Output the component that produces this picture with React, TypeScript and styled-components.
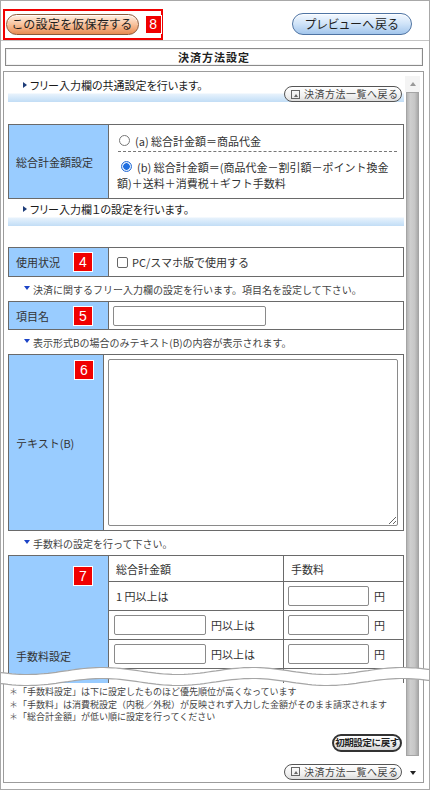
import React from "react";
import styled, { createGlobalStyle } from "styled-components";

const GlobalStyle = createGlobalStyle`
  html, body {
    margin: 0;
    padding: 0;
    background: #fff;
  }
  body {
    font-family: "Noto Sans CJK JP", "Noto Sans", sans-serif;
    color: #333;
  }
  * {
    box-sizing: border-box;
  }
`;

const Page = styled.div`
  position: relative;
  width: 430px;
  height: 790px;
  overflow: hidden;
  border: 1px solid #a8a8a8;
  background: #fff;
`;

const Toolbar = styled.div`
  height: 40px;
  padding: 7px 17px 0 2px;
  display: flex;
  align-items: center;
  justify-content: space-between;
  border-bottom: 1px solid #c4c4c4;
`;

const RedFrame = styled.div`
  width: 160px;
  height: 31px;
  border: 2px solid #f00000;
  display: flex;
  align-items: center;
  padding-left: 1px;
  gap: 7px;
`;

const PillButton = styled.button<{ $tone: "orange" | "blue" }>`
  height: ${(p) => (p.$tone === "orange" ? 21 : 22)}px;
  width: ${(p) => (p.$tone === "orange" ? 137 : 120)}px;
  border-radius: 11px;
  border: 1px solid ${(p) => (p.$tone === "orange" ? "#8c5a3a" : "#4f74a3")};
  background: ${(p) =>
    p.$tone === "orange"
      ? "linear-gradient(to bottom, #fff0e4 0%, #f8c29c 50%, #e88c52 100%)"
      : "linear-gradient(to bottom, #f4f9ff 0%, #cfe3f8 50%, #a3c6ec 100%)"};
  box-shadow: inset 0 1px 0 rgba(255, 255, 255, 0.8);
  font-family: "Noto Sans CJK JP", sans-serif;
  font-size: 12px;
  color: #1e1e1e;
  padding: 0;
  line-height: 1;
  font-feature-settings: "palt";
  letter-spacing: 0.5px;
`;

const Badge = styled.span<{ $top?: number; $right?: number; $small?: boolean }>`
  display: inline-flex;
  align-items: center;
  justify-content: center;
  width: ${(p) => (p.$small ? 16 : 18)}px;
  height: ${(p) => (p.$small ? 17 : 18)}px;
  background: #f00000;
  color: #fff;
  font-family: "Liberation Sans", sans-serif;
  font-size: 14px;
  line-height: 1;
  box-shadow: 0 0 0 1px #fff;
`;

const CellBadge = styled(Badge)`
  position: absolute;
  right: ${(p) => p.$right ?? 16}px;
  top: ${(p) => (p.$top === undefined ? "50%" : `${p.$top}px`)};
  transform: ${(p) => (p.$top === undefined ? "translateY(-50%)" : "none")};
`;

const TitleBox = styled.div`
  margin: 7px 6px 0 4px;
  height: 18px;
  border: 1px solid #8a8a8a;
  box-shadow: inset 0 0 0 1px #f2f2f2;
  display: flex;
  align-items: center;
  justify-content: center;
  font-size: 11px;
  font-weight: bold;
  color: #222;
  letter-spacing: 1px;
`;

const Panel = styled.div`
  margin: 5px 5px 0 2px;
  height: 712px;
  border: 1px solid #9c9c9c;
  display: flex;
  padding: 0 3px 0 4px;
  gap: 1px;
`;

const Content = styled.div`
  width: 396px;
  padding-top: 3px;
  display: flex;
  flex-direction: column;
`;

const Scrollbar = styled.div`
  width: 15px;
  padding: 4px 0 0;
  display: flex;
  flex-direction: column;
`;

const ScrollArrow = styled.div<{ $down?: boolean }>`
  height: 16px;
  display: flex;
  align-items: center;
  justify-content: center;
  margin-top: ${(p) => (p.$down ? 9 : 0)}px;
  background: ${(p) => (p.$down ? "#fff" : "#f4f4f4")};
  &::after {
    content: "";
    border-left: 3px solid transparent;
    border-right: 3px solid transparent;
    ${(p) =>
      p.$down
        ? "border-top: 4px solid #222;"
        : "border-bottom: 4px solid #999;"}
  }
`;

const ScrollThumb = styled.div`
  height: 664px;
  margin: 0 1px;
  background: linear-gradient(to right, #b4b4b4 0, #cfcfcf 30%, #c6c6c6 70%, #a9a9a9 100%);
  border: 1px solid #a4a4a4;
`;

const SectionHead = styled.div<{ $gap: number }>`
  height: 27px;
  margin-bottom: ${(p) => p.$gap}px;
  padding: 3px 2px 0 15px;
  display: flex;
  align-items: flex-start;
  justify-content: space-between;
  background: linear-gradient(
    to bottom,
    #fff 0,
    #fff 18px,
    #e7f2fc 19px,
    #cfe5f9 24px,
    #c2ddf5 27px
  );
`;

const HeadText = styled.div`
  font-size: 11px;
  line-height: 14px;
  color: #1a1a1a;
  font-feature-settings: "palt";
  display: flex;
  align-items: center;
  gap: 3px;
  &::before {
    content: "";
    border-top: 3px solid transparent;
    border-bottom: 3px solid transparent;
    border-left: 4px solid #1d3c78;
  }
`;

const ListButton = styled.button<{ $mt?: number }>`
  margin-top: ${(p) => p.$mt ?? 0}px;
  height: 16px;
  width: 118px;
  border: 1px solid #555;
  border-radius: 8px;
  background: linear-gradient(to bottom, #ffffff 0%, #f1f1f1 60%, #dedede 100%);
  display: flex;
  align-items: center;
  gap: 4px;
  padding: 0 0 0 6px;
  font-family: "Noto Sans CJK JP", sans-serif;
  font-size: 10px;
  color: #444;
  line-height: 1;
  letter-spacing: 0.5px;
  white-space: nowrap;
  align-self: flex-end;
`;

const ListIcon = styled.span`
  width: 9px;
  height: 9px;
  border: 1px solid #666;
  display: flex;
  align-items: flex-end;
  justify-content: center;
  padding-bottom: 1px;
  &::after {
    content: "";
    border-left: 2px solid transparent;
    border-right: 2px solid transparent;
    border-bottom: 3px solid #666;
  }
`;

const FormTable = styled.table`
  width: 396px;
  border-collapse: collapse;
  font-size: 11px;
  color: #333;
  table-layout: fixed;
`;

const LabelCell = styled.th<{ $w: number }>`
  position: relative;
  width: ${(p) => p.$w}px;
  background: #99ccff;
  border: 1px solid #6a6a6a;
  text-align: left;
  font-weight: normal;
  padding: 0 0 0 7px;
  vertical-align: middle;
  color: #333;
`;

const ValueCell = styled.td<{ $pad?: string; $h?: number; $w?: number }>`
  border: 1px solid #6a6a6a;
  padding: ${(p) => p.$pad ?? "0 0 0 7px"};
  height: ${(p) => (p.$h ? `${p.$h}px` : "auto")};
  width: ${(p) => (p.$w ? `${p.$w}px` : "auto")};
  vertical-align: middle;
`;

const RadioLine = styled.div<{ $indent?: number }>`
  display: flex;
  align-items: flex-start;
  gap: 5px;
  padding-left: ${(p) => p.$indent ?? 0}px;
  line-height: 16px;
`;

const Radio = styled.span<{ $on?: boolean }>`
  flex: none;
  width: 11px;
  height: 11px;
  margin-top: 2px;
  border-radius: 50%;
  border: 1px solid ${(p) => (p.$on ? "#2a6fd6" : "#777")};
  background: ${(p) =>
    p.$on ? "radial-gradient(circle, #1f6fe0 0 3px, #d9e8fb 3.5px)" : "#fff"};
`;

const Dashed = styled.div`
  margin: 2px 0 7px 1px;
  border-top: 1px dashed #777;
`;

const WrapText = styled.div`
  line-height: 16px;
`;

const CheckRow = styled.label`
  display: flex;
  align-items: center;
  gap: 4px;
  font-size: 11px;
`;

const CheckBox = styled.span`
  width: 11px;
  height: 11px;
  border: 1px solid #666;
  border-radius: 2px;
  background: #fff;
`;

const Note = styled.div`
  height: 24px;
  display: flex;
  align-items: center;
  gap: 3px;
  padding-left: 16px;
  font-size: 10px;
  color: #444;
  &::before {
    content: "";
    border-left: 3px solid transparent;
    border-right: 3px solid transparent;
    border-top: 4px solid #1b43c6;
    margin-top: -3px;
  }
`;

const TextInput = styled.input<{ $w: number }>`
  width: ${(p) => p.$w}px;
  height: 20px;
  border: 1px solid #8a8a8a;
  border-radius: 2px;
  padding: 0 3px;
  font-size: 11px;
  outline: none;
  vertical-align: middle;
`;

const TextArea = styled.textarea`
  display: block;
  width: 290px;
  height: 167px;
  border: 1px solid #8a8a8a;
  border-radius: 2px;
  resize: both;
  outline: none;
`;

const FeeClip = styled.div`
  height: 128px;
  overflow: hidden;
`;

const InputWithUnit = styled.div`
  display: flex;
  align-items: center;
  gap: 5px;
`;

const NoteList = styled.ul`
  list-style: none;
  margin: 3px 0 0;
  padding: 0 0 0 1px;
  font-size: 9px;
  line-height: 12.5px;
  color: #444;
`;

const NoteItem = styled.li`
  white-space: nowrap;
  &::before {
    content: "＊";
    color: #666;
  }
`;

const ResetButton = styled.button`
  align-self: flex-end;
  margin: 10px 2px 0 0;
  height: 18px;
  width: 70px;
  border: 2px solid #333;
  border-radius: 9px;
  background: linear-gradient(to bottom, #ffffff 0%, #ececec 60%, #d4d4d4 100%);
  font-family: "Noto Sans CJK JP", sans-serif;
  font-size: 9.5px;
  font-weight: bold;
  letter-spacing: -0.4px;
  white-space: nowrap;
  color: #222;
  padding: 0;
  line-height: 1;
`;

const BottomList = styled.div`
  display: flex;
  justify-content: flex-end;
  margin: 12px 2px 0 0;
`;

const WaveSvg = styled.svg`
  position: absolute;
  left: -1px;
  top: 661px;
  width: 432px;
  height: 28px;
  pointer-events: none;
`;

function TornEdge() {
  const pts: [number, number][] = [];
  for (let x = 0; x <= 432; x += 4) {
    pts.push([x, 9 + 3.5 * Math.sin((2 * Math.PI * (x + 10)) / 150)]);
  }
  const top = pts.map(([x, y], i) => `${i ? "L" : "M"}${x},${y.toFixed(1)}`).join(" ");
  const bottomPts = pts.slice().reverse();
  const bottom = bottomPts.map(([x, y]) => `L${x},${(y + 11).toFixed(1)}`).join(" ");
  const bottomLine = bottomPts
    .map(([x, y], i) => `${i ? "L" : "M"}${x},${(y + 11).toFixed(1)}`)
    .join(" ");
  return (
    <WaveSvg viewBox="0 0 432 28">
      <path d={`${top} ${bottom} Z`} fill="#fff" />
      <path d={top} fill="none" stroke="#a6a6a6" strokeWidth="1.2" />
      <path d={bottomLine} fill="none" stroke="#a6a6a6" strokeWidth="1.2" />
    </WaveSvg>
  );
}

function BackToList({ mt }: { mt?: number }) {
  return (
    <ListButton $mt={mt}>
      <ListIcon />
      決済方法一覧へ戻る
    </ListButton>
  );
}

// rows of the fee table; the ones past the third sit under the torn edge
const feeRows = [
  { kind: "first" },
  { kind: "input" },
  { kind: "input" },
  { kind: "empty" },
  { kind: "empty" },
  { kind: "empty" },
];

export default function App() {
  return (
    <>
      <GlobalStyle />
      <Page>
        <Toolbar>
          <RedFrame>
            <PillButton $tone="orange">この設定を仮保存する</PillButton>
            <Badge $small>8</Badge>
          </RedFrame>
          <PillButton $tone="blue">プレビューへ戻る</PillButton>
        </Toolbar>

        <TitleBox>決済方法設定</TitleBox>

        <Panel>
          <Content>
            <SectionHead $gap={22}>
              <HeadText>フリー入力欄の共通設定を行います。</HeadText>
              <BackToList mt={3} />
            </SectionHead>

            <FormTable>
              <tbody>
                <tr>
                  <LabelCell $w={100}>総合計金額設定</LabelCell>
                  <ValueCell $pad="8px 6px 7px 8px">
                    <RadioLine $indent={2}>
                      <Radio />
                      <span>(a) 総合計金額＝商品代金</span>
                    </RadioLine>
                    <Dashed />
                    <RadioLine $indent={4}>
                      <Radio $on />
                      <span>(b) 総合計金額＝(商品代金－割引額－ポイント換金</span>
                    </RadioLine>
                    <WrapText>額)＋送料＋消費税＋ギフト手数料</WrapText>
                  </ValueCell>
                </tr>
              </tbody>
            </FormTable>

            <SectionHead $gap={21}>
              <HeadText>フリー入力欄１の設定を行います。</HeadText>
            </SectionHead>

            <FormTable>
              <tbody>
                <tr>
                  <LabelCell $w={100}>
                    使用状況
                    <CellBadge>4</CellBadge>
                  </LabelCell>
                  <ValueCell $h={29} $pad="0 0 0 8px">
                    <CheckRow>
                      <CheckBox />
                      PC/スマホ版で使用する
                    </CheckRow>
                  </ValueCell>
                </tr>
              </tbody>
            </FormTable>

            <Note>決済に関するフリー入力欄の設定を行います。項目名を設定して下さい。</Note>

            <FormTable>
              <tbody>
                <tr>
                  <LabelCell $w={100}>
                    項目名
                    <CellBadge>5</CellBadge>
                  </LabelCell>
                  <ValueCell $h={28} $pad="0 0 0 4px">
                    <TextInput $w={153} />
                  </ValueCell>
                </tr>
              </tbody>
            </FormTable>

            <Note>表示形式Bの場合のみテキスト(B)の内容が表示されます。</Note>

            <FormTable>
              <tbody>
                <tr>
                  <LabelCell $w={95}>
                    テキスト(B)
                    <CellBadge $top={6} $right={10}>
                      6
                    </CellBadge>
                  </LabelCell>
                  <ValueCell $pad="4px 5px 4px 4px">
                    <TextArea />
                  </ValueCell>
                </tr>
              </tbody>
            </FormTable>

            <Note>手数料の設定を行って下さい。</Note>

            <FeeClip>
              <FormTable>
                <tbody>
                  <tr>
                    <LabelCell $w={100} rowSpan={7}>
                      手数料設定
                      <CellBadge $top={11}>7</CellBadge>
                    </LabelCell>
                    <ValueCell $h={26} $w={175}>
                      総合計金額
                    </ValueCell>
                    <ValueCell>手数料</ValueCell>
                  </tr>
                  {feeRows.map((row, i) => (
                    <tr key={i}>
                      <ValueCell $h={29} $pad={row.kind === "first" ? "0 0 0 7px" : "0 0 0 5px"}>
                        {row.kind === "first" && "1 円以上は"}
                        {row.kind === "input" && (
                          <InputWithUnit>
                            <TextInput $w={92} />
                            円以上は
                          </InputWithUnit>
                        )}
                      </ValueCell>
                      <ValueCell $pad="0 0 0 4px">
                        {row.kind !== "empty" && (
                          <InputWithUnit>
                            <TextInput $w={81} />円
                          </InputWithUnit>
                        )}
                      </ValueCell>
                    </tr>
                  ))}
                </tbody>
              </FormTable>
            </FeeClip>

            <NoteList>
              <NoteItem>「手数料設定」は下に設定したものほど優先順位が高くなっています</NoteItem>
              <NoteItem>
                「手数料」は消費税設定（内税／外税）が反映されず入力した金額がそのまま請求されます
              </NoteItem>
              <NoteItem>「総合計金額」が低い順に設定を行ってください</NoteItem>
            </NoteList>

            <ResetButton>初期設定に戻す</ResetButton>

            <BottomList>
              <BackToList />
            </BottomList>
          </Content>

          <Scrollbar>
            <ScrollArrow />
            <ScrollThumb />
            <ScrollArrow $down />
          </Scrollbar>
        </Panel>

        <TornEdge />
      </Page>
    </>
  );
}
